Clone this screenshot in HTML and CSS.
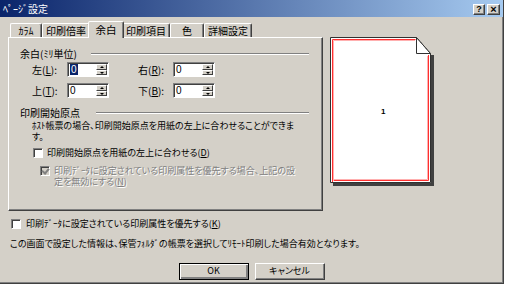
FILE: index.html
```html
<!DOCTYPE html>
<html lang="ja">
<head>
<meta charset="utf-8">
<title>ページ設定</title>
<link rel="stylesheet" href="styles.css">
</head>
<body>
<div class="window">
  <div class="titlebar">
    <span class="title">ﾍﾟｰｼﾞ設定</span>
    <div class="tbtns">
      <span class="tbtn help">?</span>
      <span class="tbtn close">×</span>
    </div>
  </div>
  <div class="main">
    <div class="tabset">
      <div class="tabs">
        <span class="tab w1">ｶﾗﾑ</span>
        <span class="tab w2">印刷倍率</span>
        <span class="tab active">余白</span>
        <span class="tab w2">印刷項目</span>
        <span class="tab w3">色</span>
        <span class="tab w2">詳細設定</span>
      </div>
      <div class="panel">
        <div class="ghead"><span>余白(ﾐﾘ単位)</span><i class="rule"></i></div>
        <div class="spins">
          <span class="lbl">左(<u>L</u>):</span>
          <span class="spin"><span class="val sel">0</span><span class="arrows"><b class="up"></b><b class="dn"></b></span></span>
          <span class="lbl col4">右(<u>R</u>):</span>
          <span class="spin"><span class="val">0</span><span class="arrows"><b class="up"></b><b class="dn"></b></span></span>
          <span class="lbl">上(<u>T</u>):</span>
          <span class="spin"><span class="val">0</span><span class="arrows"><b class="up"></b><b class="dn"></b></span></span>
          <span class="lbl col4">下(<u>B</u>):</span>
          <span class="spin"><span class="val">0</span><span class="arrows"><b class="up"></b><b class="dn"></b></span></span>
        </div>
        <div class="ghead g2"><span>印刷開始原点</span><i class="rule"></i></div>
        <p class="desc">ﾎｽﾄ帳票の場合、印刷開始原点を用紙の左上に合わせることができま<br>す。</p>
        <label class="cbrow cb1"><span class="cb"></span><span>印刷開始原点を用紙の左上に合わせる(<u>D</u>)</span></label>
        <label class="cbrow cb2 disabled"><span class="cb checked"></span><span class="dtext">印刷ﾃﾞｰﾀに設定されている印刷属性を優先する場合、上記の設<br>定を無効にする(<u>N</u>)</span></label>
      </div>
    </div>
    <div class="preview">
      <svg width="108" height="152" viewBox="0 0 108 152">
        <path d="M3 146h101v3H3z M101 18h3v131h-3z" fill="#404040"/>
        <path d="M0.5 0.5H86.5L100.5 16.5V145.5H0.5Z" fill="#fff" stroke="#303030"/>
        <path d="M2.5 145V2.5H85.5 M98.5 18V143.5H2.5" fill="none" stroke="#ff3030"/>
        <path d="M3.5 144V3.5H85 M97.5 19V142.5H3.5" fill="none" stroke="#ffb0b0"/>
        <path d="M86.5 0.5V16.5H100.5" fill="none" stroke="#303030"/>
        <path d="M86.5 0.5L100.5 16.5" fill="none" stroke="#303030" stroke-dasharray="1 1"/>
        <text x="51" y="77" font-family="Liberation Sans, sans-serif" font-size="8" font-weight="bold" fill="#000">1</text>
      </svg>
    </div>
  </div>
  <label class="cbrow cb3"><span class="cb"></span><span>印刷ﾃﾞｰﾀに設定されている印刷属性を優先する(<u>K</u>)</span></label>
  <p class="info">この画面で設定した情報は、保管ﾌｫﾙﾀﾞの帳票を選択してﾘﾓｰﾄ印刷した場合有効となります。</p>
  <div class="buttons">
    <span class="btn default">OK</span>
    <span class="btn">キャンセル</span>
  </div>
</div>
</body>
</html>
```

FILE: styles.css
```css
* { box-sizing: border-box; }
html, body { margin: 0; padding: 0; background: #fff; }
body {
  font-family: "Noto Sans CJK JP", "Noto Sans", sans-serif;
  font-size: 9px;
  line-height: 12px;
  color: #000;
  font-feature-settings: "palt";
}
u { text-decoration: underline; text-underline-offset: 1px; }
.window {
  width: 504px;
  height: 284px;
  background: #d4d0c8;
  border-right: 1px solid #404040;
  border-bottom: 1px solid #404040;
  box-shadow: inset -1px -1px 0 #808080;
  display: flex;
  flex-direction: column;
}
.titlebar {
  height: 17px;
  flex: none;
  display: flex;
  align-items: center;
  padding: 0 3px 0 3px;
  background: linear-gradient(to right, #0a246a, #a6caf0);
}
.title { color: #fff; font-size: 10px; }
.tbtns { margin-left: auto; display: flex; gap: 2px; margin-top: 2px; }
.tbtn {
  width: 12px; height: 11px;
  background: #d4d0c8;
  border: 1px solid;
  border-color: #fff #404040 #404040 #fff;
  box-shadow: inset -1px -1px 0 #808080;
  font-family: "Liberation Sans", sans-serif;
  font-weight: bold;
  font-size: 9px;
  line-height: 9px;
  text-align: center;
}
.tbtn.close { width: 13px; font-size: 11px; }
.main { display: flex; padding: 3px 0 0 8px; }
.tabset { width: 315px; display: flex; flex-direction: column; }
.tabs { display: flex; align-items: flex-end; height: 17px; padding-left: 2px; }
.tab {
  height: 14px;
  border: 1px solid;
  border-bottom: none;
  border-color: #fff #404040 transparent #fff;
  box-shadow: inset -1px 0 0 #808080;
  border-radius: 2px 2px 0 0;
  text-align: center;
  line-height: 13px;
  font-size: 10px;
}
.w1 { width: 32px; }
.w2 { width: 48px; }
.w3 { width: 34px; }
.tab.active {
  width: 36px;
  height: 17px;
  margin: 0 -2px -1px -2px;
  background: #d4d0c8;
  position: relative;
  z-index: 1;
  line-height: 15px;
  font-size: 10.5px;
}
.panel {
  height: 174px;
  border: 1px solid;
  border-color: #fff #404040 #404040 #fff;
  box-shadow: inset -1px -1px 0 #808080;
  padding: 10px 11px 0 11px;
}
.ghead { display: flex; align-items: center; height: 12px; font-size: 10px; }
.ghead .rule {
  flex: 1;
  margin-left: 14px;
  margin-right: 2px;
  height: 2px;
  border-top: 1px solid #808080;
  border-bottom: 1px solid #fff;
}
.g2 { margin-top: 9px; }
.g2 .rule { margin-left: 16px; }
.spins {
  display: grid;
  grid-template-columns: 35px 42px 29px 35px 42px;
  grid-auto-rows: 15px;
  row-gap: 6px;
  margin: 2px 0 0 12px;
  align-items: center;
  font-size: 10px;
}
.spins .col4 { grid-column: 4; }
.spin {
  display: flex;
  height: 15px;
  border: 1px solid;
  border-color: #808080 #fff #fff #808080;
  box-shadow: inset 1px 1px 0 #404040;
  background: #fff;
  padding: 1px 1px 1px 2px;
}
.val { flex: 1; line-height: 11px; font-family: "Liberation Sans", sans-serif; font-size: 10px; }
.val.sel { flex: none; background: #0a246a; color: #fff; padding: 0 1px; margin-right: auto; }
.arrows { width: 11px; display: flex; flex-direction: column; }
.arrows b {
  flex: 1;
  background: #d4d0c8;
  border: 1px solid;
  border-color: #fff #404040 #404040 #fff;
  position: relative;
}
.arrows b::after {
  content: "";
  position: absolute;
  left: 3px; top: 1px;
  border-left: 2px solid transparent;
  border-right: 2px solid transparent;
}
.arrows .up::after { border-bottom: 2px solid #000; }
.arrows .dn::after { border-top: 2px solid #000; }
.desc { margin: 1px 0 0 12px; line-height: 11px; }
.cbrow { display: flex; align-items: center; }
.cb {
  width: 10px; height: 10px;
  flex: none;
  background: #fff;
  border: 1px solid;
  border-color: #808080 #fff #fff #808080;
  box-shadow: inset 1px 1px 0 #404040;
  position: relative;
}
.cb1 { margin: 5px 0 0 13px; gap: 4px; }
.cb2 { margin: 6px 0 0 20px; gap: 4px; align-items: flex-start; }
.disabled .cb { background: #d4d0c8; margin-top: 1px; }
.cb.checked::after {
  content: "";
  position: absolute;
  left: 2px; top: 0px;
  width: 3px; height: 5px;
  border: solid #808080;
  border-width: 0 2px 2px 0;
  transform: rotate(40deg);
}
.dtext { color: #808080; text-shadow: 1px 1px 0 #fff; line-height: 11px; }
.cb3 { margin: 7px 0 0 11px; gap: 5px; }
.info { margin: 8px 0 0 10px; }
.buttons { display: flex; justify-content: center; gap: 6px; margin-top: 13px; }
.btn {
  width: 70px; height: 17px;
  border: 1px solid;
  border-color: #fff #404040 #404040 #fff;
  box-shadow: inset -1px -1px 0 #808080;
  text-align: center;
  line-height: 14px;
}
.btn.default {
  border: 1px solid #000;
  box-shadow: inset 1px 1px 0 #fff, inset -2px -2px 0 #808080;
}
.preview { margin: 17px 0 0 7px; }
.preview svg { display: block; }
```
